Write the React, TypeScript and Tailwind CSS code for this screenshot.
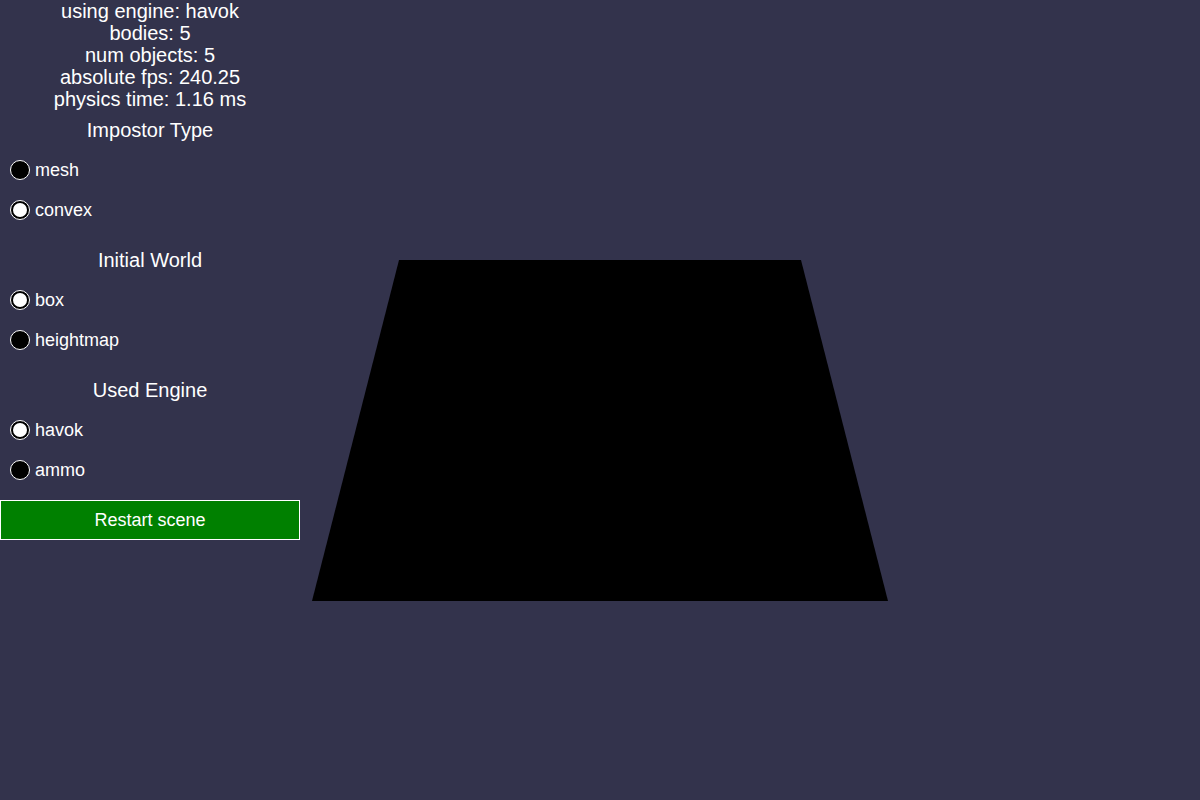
const stats = [
  "using engine: havok",
  "bodies: 5",
  "num objects: 5",
  "absolute fps: 240.25",
  "physics time: 1.16 ms",
];

const groups = [
  { title: "Impostor Type", options: ["mesh", "convex"], selected: "convex" },
  { title: "Initial World", options: ["box", "heightmap"], selected: "box" },
  { title: "Used Engine", options: ["havok", "ammo"], selected: "havok" },
];

function Radio({ label, checked }: { label: string; checked: boolean }) {
  return (
    <div className="flex h-10 items-center">
      <div className="ml-[10px] flex h-5 w-5 items-center justify-center rounded-full border border-white bg-black">
        {checked && <div className="h-[14px] w-[14px] rounded-full bg-white" />}
      </div>
      <span className="ml-[5px] text-[18px] text-white">{label}</span>
    </div>
  );
}

export default function App() {
  return (
    <div
      className="relative h-[800px] w-[1200px] overflow-hidden bg-[#33334c]"
      style={{ fontFamily: '"Liberation Sans", Arial, sans-serif' }}
    >
      <svg className="absolute inset-0" width="1200" height="800" viewBox="0 0 1200 800">
        <polygon points="399,260 801,260 888,601 312,601" fill="#000000" />
      </svg>

      <div className="absolute left-0 top-0 flex w-[300px] flex-col">
        <div className="flex flex-col items-center text-[20px] leading-[22px] text-white">
          {stats.map((s) => (
            <div key={s}>{s}</div>
          ))}
        </div>
        {groups.map((g, i) => (
          <div key={g.title} className={i > 0 ? "mt-[10px] flex flex-col" : "flex flex-col"}>
            <div className="flex h-10 items-center justify-center text-[20px] text-white">{g.title}</div>
            {g.options.map((o) => (
              <Radio key={o} label={o} checked={o === g.selected} />
            ))}
          </div>
        ))}
        <button className="mt-[10px] h-10 w-[300px] border border-white bg-[#008000] text-[18px] text-white">
          Restart scene
        </button>
      </div>
    </div>
  );
}
